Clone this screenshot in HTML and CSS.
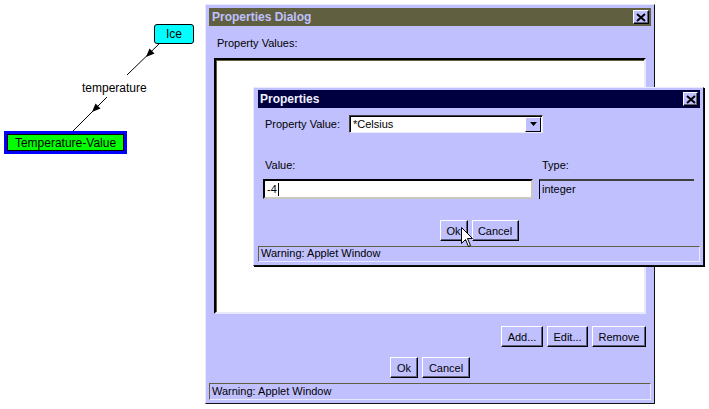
FILE: index.html
```html
<!DOCTYPE html>
<html lang="en">

<head>
  <meta charset="UTF-8">
  <meta name="viewport" content="width=device-width, initial-scale=1.0">
  <title>Properties Dialog</title>
  <link rel="stylesheet" href="styles.css">
</head>

<body>

  <!-- graph canvas -->
  <div class="canvas">
    <svg class="edges" width="709" height="409" viewBox="0 0 709 409">
      <line x1="160" y1="43" x2="127" y2="75" stroke="#000" stroke-width="1" />
      <line x1="107" y1="97" x2="73" y2="131" stroke="#000" stroke-width="1" />
      <polygon points="146,57 154.5,53.5 149.5,48.5" fill="#000" />
      <polygon points="92,112 100.5,108.5 95.5,103.5" fill="#000" />
    </svg>
    <div class="node node-ice">Ice</div>
    <div class="edge-label">temperature</div>
    <div class="node node-value">Temperature-Value</div>
  </div>

  <!-- main dialog -->
  <div class="dialog dialog-main">
    <div class="titlebar titlebar-olive">
      <span>Properties Dialog</span>
      <span class="close-btn">
        <svg width="10" height="9" viewBox="0 0 10 9">
          <path d="M1 1 L9 8 M9 1 L1 8" stroke="#000" stroke-width="2" />
        </svg>
      </span>
    </div>
    <div class="label-row">Property Values:</div>
    <div class="listbox"></div>
    <div class="btn-row btn-row-right">
      <span class="btn btn-add">Add...</span>
      <span class="btn btn-edit">Edit...</span>
      <span class="btn btn-remove">Remove</span>
    </div>
    <div class="btn-row btn-row-center">
      <span class="btn btn-ok">Ok</span>
      <span class="btn btn-cancel">Cancel</span>
    </div>
    <div class="statusbar">Warning: Applet Window</div>
  </div>

  <!-- properties dialog on top -->
  <div class="dialog dialog-props">
    <div class="titlebar titlebar-navy">
      <span>Properties</span>
      <span class="close-btn">
        <svg width="10" height="9" viewBox="0 0 10 9">
          <path d="M1 1 L9 8 M9 1 L1 8" stroke="#000" stroke-width="2" />
        </svg>
      </span>
    </div>
    <div class="prop-row">
      <span class="prop-label">Property Value:</span>
      <div class="select">
        <span class="select-text">*Celsius</span>
        <span class="select-arrow">
          <svg width="7" height="4" viewBox="0 0 7 4">
            <polygon points="0,0 7,0 3.5,4" fill="#000" />
          </svg>
        </span>
      </div>
    </div>
    <div class="field-grid">
      <span class="field-label">Value:</span>
      <span class="field-label type-label">Type:</span>
      <div class="text-input">-4<span class="caret"></span></div>
      <div class="type-field">integer</div>
    </div>
    <div class="btn-row btn-row-center props-btns">
      <span class="btn btn-ok-small">Ok</span>
      <span class="btn btn-cancel-small">Cancel</span>
    </div>
    <div class="statusbar statusbar-small">Warning: Applet Window</div>
  </div>

  <!-- mouse pointer -->
  <svg class="pointer" width="13" height="21" viewBox="0 0 13 21">
    <polygon points="0.5,0.5 0.5,16.5 4.5,12.5 7.5,19.5 9.5,18.5 6.5,11.5 11.5,11.5" fill="#fff" stroke="#000"
      stroke-width="1" />
  </svg>

</body>

</html>
```

FILE: styles.css
```css
* {
  margin: 0;
  padding: 0;
  box-sizing: border-box;
}

body {
  width: 709px;
  height: 409px;
  position: relative;
  overflow: hidden;
  background-color: #fff;
  font-family: "Liberation Sans", Arial, sans-serif;
  font-size: 11px;
  color: #000;
}

/* graph canvas */
.canvas {
  position: absolute;
  left: 0;
  top: 0;
  width: 709px;
  height: 409px;
}

.edges {
  position: absolute;
  left: 0;
  top: 0;
}

.node {
  position: absolute;
  display: flex;
  align-items: center;
  justify-content: center;
  font-size: 12px;
}

.node-ice {
  left: 154px;
  top: 24px;
  width: 40px;
  height: 20px;
  background-color: #00ffff;
  border: 1px solid #000;
  border-radius: 3px;
}

.node-value {
  left: 4px;
  top: 131px;
  width: 123px;
  height: 23px;
  background-color: #00ff00;
  border: 3px solid #0000ff;
  box-shadow: inset 0 0 0 1px #000;
}

.edge-label {
  position: absolute;
  left: 82px;
  top: 81px;
  font-size: 12px;
  background-color: #fff;
}

/* dialogs */
.dialog {
  position: absolute;
  display: flex;
  flex-direction: column;
  background-color: #c0c0ff;
  border: 1px solid;
  border-color: #e8e8ff #101010 #101010 #e8e8ff;
}

.dialog-main {
  left: 205px;
  top: 4px;
  width: 450px;
  height: 400px;
  padding: 3px;
}

.dialog-props {
  left: 253px;
  top: 87px;
  width: 451px;
  height: 179px;
  padding: 2px 3px 3px 4px;
  box-shadow: 1px 1px 0 #000;
}

.titlebar {
  height: 18px;
  display: flex;
  align-items: center;
  justify-content: space-between;
  padding: 0 2px 0 3px;
  font-size: 12px;
  font-weight: bold;
}

.titlebar-olive {
  background-color: #606040;
  color: #c0c0ff;
}

.titlebar-navy {
  background-color: #000040;
  color: #f0f0ff;
  padding-left: 2px;
}

.close-btn {
  width: 16px;
  height: 14px;
  display: flex;
  align-items: center;
  justify-content: center;
  background-color: #c0c0ff;
  border: 1px solid;
  border-color: #fff #000 #000 #fff;
  box-shadow: inset -1px -1px 0 #606080;
}

.titlebar-navy .close-btn {
  width: 15px;
}

.label-row {
  margin-top: 10px;
  height: 14px;
  line-height: 14px;
  padding-left: 8px;
}

.listbox {
  flex: 1;
  margin: 8px 5px 0 5px;
  background-color: #fff;
  border: 2px solid;
  border-color: #000 #e8e8ff #e8e8ff #000;
  box-shadow: inset 1px 1px 0 #606040;
}

.btn-row {
  display: flex;
  gap: 4px;
  height: 21px;
}

.btn-row-right {
  margin-top: 12px;
  justify-content: flex-end;
  padding-right: 5px;
}

.btn-row-center {
  margin-top: 10px;
  justify-content: center;
}

.btn {
  height: 21px;
  display: flex;
  align-items: center;
  justify-content: center;
  background-color: #c0c0ff;
  border: 1px solid;
  border-color: #fff #000 #000 #fff;
  box-shadow: inset -1px -1px 0 #606080;
}

.btn-add {
  width: 42px;
}

.btn-edit {
  width: 41px;
}

.btn-remove {
  width: 54px;
}

.btn-ok {
  width: 28px;
}

.btn-cancel {
  width: 48px;
}

.btn-ok-small {
  width: 28px;
}

.btn-cancel-small {
  width: 47px;
}

.statusbar {
  margin-top: 5px;
  height: 17px;
  line-height: 14px;
  padding-left: 2px;
  border: 1px solid;
  border-color: #606040 #e8e8ff #e8e8ff #606040;
}

/* properties dialog */
.prop-row {
  margin-top: 7px;
  height: 18px;
  display: flex;
  align-items: center;
}

.prop-label {
  width: 91px;
  padding-left: 7px;
}

.select {
  width: 194px;
  height: 18px;
  display: flex;
  align-items: center;
  justify-content: space-between;
  background-color: #fff;
  border: 1px solid;
  border-color: #404040 #e8e8ff #e8e8ff #404040;
  box-shadow: inset 1px 1px 0 #000;
  padding: 0 1px 0 3px;
}

.select-arrow {
  width: 16px;
  height: 15px;
  display: flex;
  align-items: center;
  justify-content: center;
  background-color: #c0c0ff;
  border: 1px solid;
  border-color: #fff #000 #000 #fff;
}

.field-grid {
  display: grid;
  grid-template-columns: 270px 1fr;
  grid-template-rows: 16px 20px;
  column-gap: 6px;
  row-gap: 6px;
  margin-top: 24px;
  padding: 0 6px 0 5px;
}

.field-label {
  line-height: 16px;
  padding-left: 2px;
}

.type-label {
  padding-left: 3px;
}

.text-input {
  display: flex;
  align-items: center;
  padding-left: 2px;
  background-color: #fff;
  border: 2px solid;
  border-color: #000 #c8c8c0 #c8c8c0 #000;
}

.caret {
  width: 1px;
  height: 13px;
  margin-left: 1px;
  background-color: #000;
}

.type-field {
  padding-left: 2px;
  line-height: 16px;
  border-top: 2px solid #404040;
  border-left: 1px solid #000;
}

.props-btns {
  margin-top: 21px;
}

.statusbar-small {
  height: 16px;
  line-height: 13px;
}

.pointer {
  position: absolute;
  left: 461px;
  top: 227px;
}
```
